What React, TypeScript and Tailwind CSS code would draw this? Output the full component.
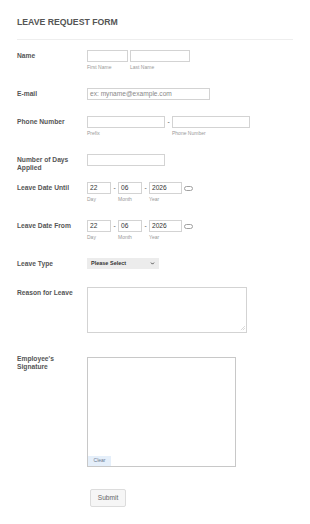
import { ChevronDown } from "lucide-react";

function Label({ children, className = "" }: { children: React.ReactNode; className?: string }) {
  return (
    <div className={`w-[70px] shrink-0 pt-[2px] text-[6.7px] font-bold leading-[8px] text-[#555] ${className}`}>
      {children}
    </div>
  );
}

function Field({ w, value, placeholder }: { w: string; value?: string; placeholder?: string }) {
  return (
    <div
      className={`${w} flex h-[12px] items-center border border-[#d3d3d3] bg-white pl-[2px] text-[6.6px] leading-none ${
        value ? "text-[#333]" : "text-[#888]"
      }`}
    >
      {value ?? placeholder}
    </div>
  );
}

function Sub({ children, className = "" }: { children: React.ReactNode; className?: string }) {
  return <div className={`mt-[2px] text-[5px] leading-[6px] text-[#999] ${className}`}>{children}</div>;
}

function Dash() {
  return <span className="flex h-[12px] w-[7px] items-center justify-center text-[6.6px] text-[#555]">-</span>;
}

function DateRow({ label }: { label: string }) {
  return (
    <div className="flex h-[38px]">
      <Label>{label}</Label>
      <div className="flex">
        <div>
          <Field w="w-[24px]" value="22" />
          <Sub>Day</Sub>
        </div>
        <Dash />
        <div>
          <Field w="w-[24px]" value="06" />
          <Sub>Month</Sub>
        </div>
        <Dash />
        <div>
          <Field w="w-[33px]" value="2026" />
          <Sub>Year</Sub>
        </div>
        <div className="ml-[2px] flex h-[12px] items-center">
          <svg width="9" height="5" viewBox="0 0 9 5">
            <rect x="0.5" y="0.5" width="8" height="4" rx="2" fill="none" stroke="#a0a0a0" strokeWidth="1" />
          </svg>
        </div>
      </div>
    </div>
  );
}

export default function App() {
  return (
    <div className="min-h-[524px] bg-white px-[17px] pt-[17px] font-['Liberation_Sans',Arial,sans-serif]">
      <h1 className="text-[8.7px] font-bold leading-[10px] text-[#555]">LEAVE REQUEST FORM</h1>
      <div className="mt-[12px] w-[276px] border-b border-[#eeeeee]" />

      <div className="mt-[10px] flex flex-col">
        {/* Name */}
        <div className="flex h-[38px]">
          <Label>Name</Label>
          <div className="flex gap-[2px]">
            <div>
              <Field w="w-[41px]" />
              <Sub>First Name</Sub>
            </div>
            <div>
              <Field w="w-[60px]" />
              <Sub>Last Name</Sub>
            </div>
          </div>
        </div>

        {/* E-mail */}
        <div className="flex h-[28px]">
          <Label>E-mail</Label>
          <Field w="w-[123px]" placeholder="ex: myname@example.com" />
        </div>

        {/* Phone */}
        <div className="flex h-[38px]">
          <Label>Phone Number</Label>
          <div className="flex">
            <div>
              <Field w="w-[78px]" />
              <Sub>Prefix</Sub>
            </div>
            <Dash />
            <div>
              <Field w="w-[78px]" />
              <Sub>Phone Number</Sub>
            </div>
          </div>
        </div>

        {/* Days */}
        <div className="flex h-[28px]">
          <Label>
            Number of Days
            <br />
            Applied
          </Label>
          <Field w="w-[78px]" />
        </div>

        <DateRow label="Leave Date Until" />
        <DateRow label="Leave Date From" />

        {/* Leave type */}
        <div className="flex h-[29px]">
          <Label>Leave Type</Label>
          <div className="flex h-[11px] w-[72px] items-center justify-between bg-[#ececec] pl-[4px] pr-[4px] text-[5.5px] font-bold text-[#333]">
            Please Select
            <ChevronDown size={5} strokeWidth={4} className="text-[#333]" />
          </div>
        </div>

        {/* Reason */}
        <div className="flex h-[70px]">
          <Label>Reason for Leave</Label>
          <div className="relative h-[46px] w-[160px]">
            <textarea className="h-full w-full resize-none border border-[#d3d3d3] bg-white text-[6.6px] outline-none" />
            <svg className="absolute bottom-[2px] right-[2px]" width="5" height="5" viewBox="0 0 5 5">
              <path d="M4.5 0.5 L0.5 4.5 M4.5 2.5 L2.5 4.5" stroke="#a8a8a8" strokeWidth="0.8" strokeDasharray="0.8 0.6" />
            </svg>
          </div>
        </div>

        {/* Signature */}
        <div className="-mt-[4px] flex h-[136px]">
          <Label className="pt-0">
            Employee's
            <br />
            Signature
          </Label>
          <div className="mt-[4px] flex h-[110px] w-[149px] items-end border border-[#c8c8c8] bg-white p-0">
            <div className="flex h-[10px] w-[23px] items-center justify-center bg-[#e5effa] text-[5px] text-[#6a7a90]">
              Clear
            </div>
          </div>
        </div>

        {/* Submit */}
        <div className="flex pb-[17px]">
          <div className="w-[73px] shrink-0" />
          <button className="flex h-[18px] w-[36px] items-center justify-center rounded-[2px] border border-[#dcdcdc] bg-[#f6f6f6] text-[6.6px] text-[#666]">
            Submit
          </button>
        </div>
      </div>
    </div>
  );
}
